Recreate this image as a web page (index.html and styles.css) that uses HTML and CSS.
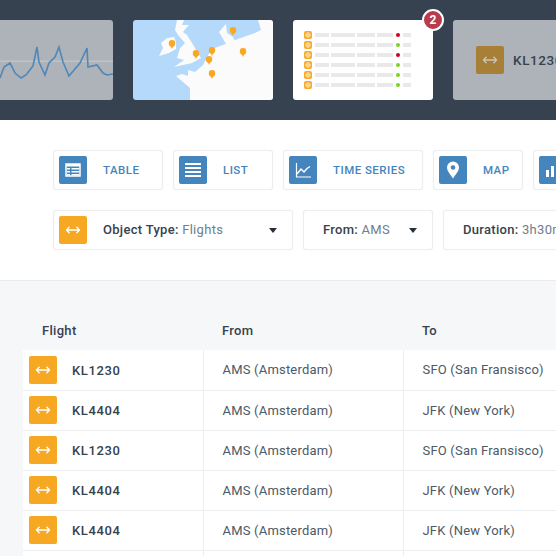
FILE: index.html
```html
<!DOCTYPE html>
<html lang="en">
<head>
  <meta charset="UTF-8">
  <meta name="viewport" content="width=device-width, initial-scale=1.0">
  <title>Flights</title>
  <link rel="stylesheet" href="styles.css">
</head>
<body>
  <svg class="defs" aria-hidden="true">
    <symbol id="arrows" viewBox="0 0 28 28">
      <path d="M10.5 10.8 7.5 14l3 3.2M17.5 10.8l3 3.2-3 3.2M7.5 14h13" fill="none" stroke="currentColor" stroke-width="1.3"/>
    </symbol>
    <symbol id="pin" viewBox="0 0 6 8">
      <path d="M3 0a3 3 0 0 1 3 3c0 1.5-1.5 2.5-2.2 3.2L3 8l-.8-1.8C1.500 5.500 0 4.500 0 3a3 3 0 0 1 3-3z" fill="#f9a825"/>
    </symbol>
  </svg>

  <div class="slides">
    <div class="slide slide-faded">
      <svg class="slide-art" viewBox="0 0 140 80">
        <rect x="0" y="40.5" width="140" height="1.5" fill="#bfc2c6"/>
        <polyline points="27,58 31,47 37,43 42,53 48,58 53,55 60,46 64,27 66,42 72,55 76,43 82,37 86,27 90,42 96,56 107,43 114,28 115,47 124,45 130,53 134,55 140,54" fill="none" stroke="#4f87b8" stroke-width="1.6"/>
      </svg>
    </div>
    <div class="slide slide-map">
      <svg class="slide-art" viewBox="0 0 140 80">
        <g fill="#fbfbfb">
          <polygon points="44,0 51,0 49,5 56,5 50,12 54,15 59,23 65,33 68,38 59,43 41,47 51,40 44,38 47,28 52,23 45,15 42,10"/>
          <polygon points="34,18 41,17 43,22 43,29 36,33 26,36 30,28 28,23"/>
          <polygon points="57,80 57,68 43,56 49,54 55,56 55,50 62,52 70,45 75,35 80,28.5 90,25 102,20 122,13 128,10 125,0 140,0 140,80"/>
          <polygon points="86,12 93,4 94,13 100,17 102,22 93,24 89,17"/>
        </g>
        <use href="#pin" x="35.5" y="20" width="7" height="9"/>
        <use href="#pin" x="59.5" y="30" width="7" height="9"/>
        <use href="#pin" x="75.5" y="27" width="7" height="9"/>
        <use href="#pin" x="72.5" y="36" width="7" height="9"/>
        <use href="#pin" x="75.5" y="50" width="7" height="9"/>
        <use href="#pin" x="106.5" y="28" width="7" height="9"/>
        <use href="#pin" x="96.5" y="7" width="7" height="9"/>
      </svg>
    </div>
    <div class="slide slide-list">
      <span class="badge">2</span>
      <div class="mini-row"><i class="mini-icon"></i><i class="mini-bar w14"></i><i class="mini-bar w24"></i><i class="mini-bar w18"></i><i class="mini-bar w16"></i><i class="mini-dot red"></i><i class="mini-bar w8"></i></div>
      <div class="mini-row"><i class="mini-icon"></i><i class="mini-bar w14"></i><i class="mini-bar w24"></i><i class="mini-bar w18"></i><i class="mini-bar w16"></i><i class="mini-dot green"></i><i class="mini-bar w8"></i></div>
      <div class="mini-row"><i class="mini-icon"></i><i class="mini-bar w14"></i><i class="mini-bar w24"></i><i class="mini-bar w18"></i><i class="mini-bar w16"></i><i class="mini-dot red"></i><i class="mini-bar w8"></i></div>
      <div class="mini-row"><i class="mini-icon"></i><i class="mini-bar w14"></i><i class="mini-bar w24"></i><i class="mini-bar w18"></i><i class="mini-bar w16"></i><i class="mini-dot green"></i><i class="mini-bar w8"></i></div>
      <div class="mini-row"><i class="mini-icon"></i><i class="mini-bar w14"></i><i class="mini-bar w24"></i><i class="mini-bar w18"></i><i class="mini-bar w16"></i><i class="mini-dot green"></i><i class="mini-bar w8"></i></div>
      <div class="mini-row"><i class="mini-icon"></i><i class="mini-bar w14"></i><i class="mini-bar w24"></i><i class="mini-bar w18"></i><i class="mini-bar w16"></i><i class="mini-dot green"></i><i class="mini-bar w8"></i></div>
    </div>
    <div class="slide slide-faded slide-flight">
      <span class="tile tile-orange"><svg class="tile-svg"><use href="#arrows"/></svg></span>
      <span class="slide-code">KL1230</span>
    </div>
  </div>

  <div class="toolbar">
    <div class="tool-row">
      <button class="view-btn w110">
        <span class="tile tile-blue">
          <svg class="tile-svg" viewBox="0 0 28 28"><path d="M7 8h14v12H7z" fill="none" stroke="#fff" stroke-width="1.5"/><path d="M7 8h14v2.5H7zM8 12h3v1.5H8zM8 15h3v1.5H8zM8 18h3v1.5H8zM12.5 12H20v1.5h-7.5zM12.5 15H20v1.5h-7.5zM12.5 18H20v1.5h-7.5z" fill="#fff"/></svg>
        </span>
        <span class="view-label">TABLE</span>
      </button>
      <button class="view-btn w100">
        <span class="tile tile-blue">
          <svg class="tile-svg" viewBox="0 0 28 28"><path d="M6 7h16v2H6zM6 11h16v2H6zM6 15h16v2H6zM6 19h16v2H6z" fill="#fff"/></svg>
        </span>
        <span class="view-label">LIST</span>
      </button>
      <button class="view-btn w140">
        <span class="tile tile-blue">
          <svg class="tile-svg" viewBox="0 0 28 28"><path d="M7.5 7v14H22" fill="none" stroke="#fff" stroke-width="1.2"/><path d="m8 18 4-5 3 3 3-3.5 3-2" fill="none" stroke="#fff" stroke-width="1.4"/></svg>
        </span>
        <span class="view-label">TIME SERIES</span>
      </button>
      <button class="view-btn w90">
        <span class="tile tile-blue">
          <svg class="tile-svg" viewBox="0 0 28 28"><path fill-rule="evenodd" d="M14 5.5a6 6 0 0 1 6 6c0 3.5-3.5 7-6 11-2.500-4-6-7.500-6-11a6 6 0 0 1 6-6zm0 3.700a2.300 2.300 0 1 0 0 4.600 2.300 2.300 0 0 0 0-4.600z" fill="#fff"/></svg>
        </span>
        <span class="view-label">MAP</span>
      </button>
      <button class="view-btn w100">
        <span class="tile tile-blue">
          <svg class="tile-svg" viewBox="0 0 28 28"><path d="M7 14h3v7H7zM12 10h3v11h-3zM17 7h3v14h-3z" fill="#fff"/></svg>
        </span>
        <span class="view-label">BAR</span>
      </button>
    </div>
    <div class="tool-row">
      <div class="filter w240">
        <span class="tile tile-orange"><svg class="tile-svg"><use href="#arrows"/></svg></span>
        <span class="filter-text filter-text-icon"><b>Object Type:</b> Flights</span>
        <i class="caret"></i>
      </div>
      <div class="filter w130">
        <span class="filter-text"><b>From:</b> AMS</span>
        <i class="caret"></i>
      </div>
      <div class="filter w150">
        <span class="filter-text"><b>Duration:</b> 3h30m</span>
        <i class="caret"></i>
      </div>
    </div>
  </div>

  <div class="results">
    <table class="flights">
      <thead>
        <tr><th class="col-flight">Flight</th><th class="col-from">From</th><th class="col-to">To</th></tr>
      </thead>
      <tbody>
        <tr>
          <td class="cell-flight"><span class="tile tile-orange"><svg class="tile-svg"><use href="#arrows"/></svg></span><b>KL1230</b></td>
          <td>AMS (Amsterdam)</td><td>SFO (San Fransisco)</td>
        </tr>
        <tr>
          <td class="cell-flight"><span class="tile tile-orange"><svg class="tile-svg"><use href="#arrows"/></svg></span><b>KL4404</b></td>
          <td>AMS (Amsterdam)</td><td>JFK (New York)</td>
        </tr>
        <tr>
          <td class="cell-flight"><span class="tile tile-orange"><svg class="tile-svg"><use href="#arrows"/></svg></span><b>KL1230</b></td>
          <td>AMS (Amsterdam)</td><td>SFO (San Fransisco)</td>
        </tr>
        <tr>
          <td class="cell-flight"><span class="tile tile-orange"><svg class="tile-svg"><use href="#arrows"/></svg></span><b>KL4404</b></td>
          <td>AMS (Amsterdam)</td><td>JFK (New York)</td>
        </tr>
        <tr>
          <td class="cell-flight"><span class="tile tile-orange"><svg class="tile-svg"><use href="#arrows"/></svg></span><b>KL4404</b></td>
          <td>AMS (Amsterdam)</td><td>JFK (New York)</td>
        </tr>
        <tr>
          <td class="cell-flight"><span class="tile tile-orange"><svg class="tile-svg"><use href="#arrows"/></svg></span><b>KL1230</b></td>
          <td>AMS (Amsterdam)</td><td>SFO (San Fransisco)</td>
        </tr>
      </tbody>
    </table>
  </div>
</body>
</html>
```

FILE: styles.css
```css
* { box-sizing: border-box; margin: 0; padding: 0; }
html, body { height: 100%; overflow: hidden; }
body {
  font-family: Roboto, "Liberation Sans", sans-serif;
  font-size: 13px;
  color: #36424f;
  background: #f6f7f9;
}
.defs { display: none; }

/* Top strip of slides */
.slides {
  display: flex;
  gap: 20px;
  height: 120px;
  padding: 20px 0;
  margin-left: -27px;
  width: 640px;
  background: #36424f;
}
.slide {
  position: relative;
  flex: 0 0 140px;
  height: 80px;
  background: #fff;
  border-radius: 3px;
}
.slide-faded { background: #aeb2b9; }
.slide-map { background: #b5d9fb; overflow: hidden; }
.slide-art { display: block; width: 140px; height: 80px; }
.slide-list { padding-top: 11px; padding-left: 11px; }
.slide-flight { display: flex; align-items: center; padding-left: 23px; gap: 9px; }
.slide-flight .tile { background: #a87f37; color: #c9c6bd; }
.slide-code { font-size: 13.5px; font-weight: 500; letter-spacing: 0.6px; }

.badge {
  position: absolute;
  top: -11px;
  right: -11px;
  width: 22px;
  height: 22px;
  border: 2px solid #fff;
  border-radius: 50%;
  background: #b83b4e;
  color: #fff;
  font-size: 12px;
  font-weight: 700;
  line-height: 18px;
  text-align: center;
}

/* Little list preview */
.mini-row { display: flex; align-items: center; height: 8px; margin-bottom: 2px; }
.mini-row i { display: block; }
.mini-icon {
  width: 8px;
  height: 8px;
  margin-right: 3px;
  border-radius: 2px;
  background: radial-gradient(circle, #fbd38a 0 2.5px, #f9a825 3px);
}
.mini-bar { height: 4px; margin-right: 2px; background: #e9e9e9; }
.mini-dot { width: 4px; height: 4px; margin: 0 3px 0 1px; border-radius: 50%; }
.w14 { width: 14px; }
.w24 { width: 24px; }
.w18 { width: 18px; }
.w16 { width: 16px; }
.w8 { width: 8px; }
.red { background: #d0021b; }
.green { background: #7ed321; }

/* Icon tiles */
.tile {
  display: block;
  flex: 0 0 28px;
  width: 28px;
  height: 28px;
  border-radius: 2px;
  color: #fff;
}
.tile-blue { background: #4585bd; }
.tile-orange { background: #f7a823; }
.tile-svg { display: block; width: 28px; height: 28px; }

/* Toolbar */
.toolbar {
  display: flex;
  flex-direction: column;
  gap: 20px;
  height: 161px;
  padding: 30px 0 30px 53px;
  background: #fff;
  border-bottom: 1px solid #e9ebee;
}
.tool-row { display: flex; gap: 10px; height: 40px; width: 800px; }
.view-btn, .filter {
  display: flex;
  flex: 0 0 auto;
  align-items: center;
  height: 40px;
  background: #fff;
  border: 1px solid #eceef0;
  border-radius: 3px;
  box-shadow: 0 0 1px #e4e6e9;
  font-family: inherit;
}
.view-btn { padding-left: 5px; }
.view-label {
  margin-left: 16px;
  color: #4585bd;
  font-size: 11.5px;
  font-weight: 500;
  letter-spacing: 0.45px;
}
.w90 { width: 90px; }
.w100 { width: 100px; }
.w110 { width: 110px; }
.w130 { width: 130px; }
.w140 { width: 140px; }
.w150 { width: 150px; }
.w240 { width: 240px; }
.filter { padding: 0 15px 0 19px; justify-content: space-between; }
.filter .tile { margin-left: -14px; }
.filter-text { color: #6f7d8c; font-size: 13px; letter-spacing: 0.3px; white-space: nowrap; line-height: 38px; padding-bottom: 1px; }
.filter-text b { color: #36424f; font-weight: 500; }
.filter-text-icon { margin-left: 16px; margin-right: auto; }
.caret {
  width: 0;
  height: 0;
  border-style: solid;
  border-width: 5px 4px 0 4px;
  border-color: #27303a transparent transparent transparent;
}

/* Results table */
.results { padding: 29px 0 0 23px; }
.flights { width: 620px; border-collapse: collapse; table-layout: fixed; }
.flights th {
  height: 40px;
  padding-left: 19px;
  font-size: 13px;
  font-weight: 500;
  letter-spacing: 0.3px;
  text-align: left;
}
.col-flight { width: 180px; }
.col-from { width: 200px; }
.flights td {
  height: 40px;
  padding-left: 19px;
  background: #fff;
  border-right: 1px solid #eceef0;
  border-bottom: 1px solid #eceef0;
  font-size: 13px;
  letter-spacing: 0.2px;
  white-space: nowrap;
  color: #4d5966;
}
.flights td.cell-flight { padding-left: 6px; }
.cell-flight .tile { display: inline-block; vertical-align: middle; margin-right: 15px; }
.cell-flight b { font-weight: 500; letter-spacing: 0.6px; color: #36424f; vertical-align: middle; }
```
